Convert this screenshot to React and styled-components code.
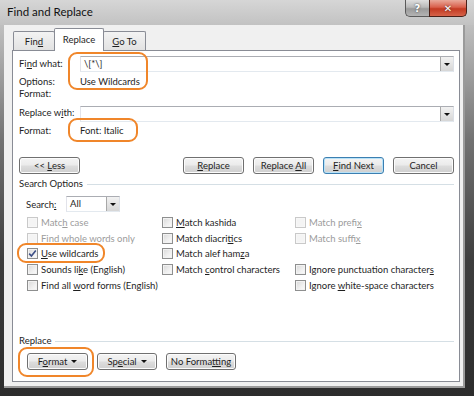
import React from "react";
import styled, { createGlobalStyle, css } from "styled-components";

const GlobalStyle = createGlobalStyle`
  html, body {
    margin: 0;
    padding: 0;
    background: #2b2b2b;
  }
  body {
    font-family: "Segoe UI", Lato, "Open Sans", sans-serif;
    font-size: 9.5px;
    color: #1e1e1e;
  }
  * {
    box-sizing: border-box;
  }
`;

const Window = styled.div`
  position: relative;
  width: 474px;
  height: 396px;
  overflow: hidden;
  display: flex;
  flex-direction: column;
  background: linear-gradient(
    to bottom,
    #cfcfcf 0px,
    #bcbcbc 30px,
    #727272 140px,
    #3e3e3e 260px,
    #2c2c2c 396px
  );
`;

const TitleBar = styled.div`
  height: 25px;
  flex: none;
  display: flex;
  align-items: flex-start;
  padding: 0 7px 0 7px;
  background: linear-gradient(to bottom, #d6d6d6, #c2c2c2);
`;

const Title = styled.div`
  flex: 1;
  margin-top: 5px;
  font-size: 11.5px;
  line-height: 14px;
  color: #111;
`;

const CaptionButton = styled.div`
  height: 17px;
  display: flex;
  align-items: center;
  justify-content: center;
  color: #fff;
  font-family: "DejaVu Sans", sans-serif;
  font-weight: bold;
  text-shadow: 0 0 2px #333;
  ${(p) =>
    p.$close
      ? css`
          width: 38px;
          font-size: 10px;
          border: 1px solid #4a2018;
          border-top: none;
          border-radius: 0 0 5px 0;
          background: linear-gradient(
            to bottom,
            #e9a99a 0%,
            #d9604c 45%,
            #c33a22 55%,
            #d6634a 100%
          );
        `
      : css`
          width: 24px;
          font-size: 10px;
          border: 1px solid #5a5a5a;
          border-top: none;
          border-right: none;
          border-radius: 0 0 0 5px;
          background: linear-gradient(
            to bottom,
            #dedede 0%,
            #b9b9b9 45%,
            #9a9a9a 55%,
            #b4b4b4 100%
          );
        `}
`;

const Client = styled.div`
  flex: 1;
  display: flex;
  flex-direction: column;
  margin: 0 11px 10px 4px;
  padding: 3px 3px 4px 8px;
  background: #f0f0f0;
  box-shadow: 1px 1px 0 1px #9a9a9a;
`;

const TabStrip = styled.div`
  height: 22px;
  flex: none;
  display: flex;
  align-items: flex-end;
  padding-left: 2px;
`;

const Tab = styled.div`
  position: relative;
  width: ${(p) => p.$w}px;
  height: 19px;
  margin-left: -1px;
  display: flex;
  align-items: center;
  justify-content: center;
  padding-top: 1px;
  border: 1px solid #898c95;
  border-bottom: none;
  border-radius: 2px 2px 0 0;
  background: linear-gradient(to bottom, #f3f3f3, #e2e2e2);
  ${(p) =>
    p.$active &&
    css`
      z-index: 1;
      height: 23px;
      margin-bottom: -1px;
      padding-top: 0;
      padding-bottom: 2px;
      background: #fff;
    `}
`;

const Panel = styled.div`
  flex: 1;
  display: flex;
  flex-direction: column;
  padding: 5px 5px 11px 6px;
  background: #fff;
  border: 1px solid #898c95;
`;

const FieldGrid = styled.div`
  display: grid;
  grid-template-columns: 61px 1fr;
  grid-template-rows: 16px 16px 12px 22px 15px;
  align-items: end;
`;

const Label = styled.div`
  line-height: 12px;
  white-space: nowrap;
  ${(p) =>
    p.$combo &&
    css`
      align-self: end;
      line-height: 16px;
      margin-bottom: ${p.$lift || 0}px;
    `}
`;

const Value = styled.div`
  line-height: 12px;
  white-space: nowrap;
`;

const Combo = styled.div`
  height: 16px;
  display: flex;
  align-items: center;
  border: 1px solid #abadb3;
  border-color: #abadb3 #dbdfe6 #e3e9ef #e2e3ea;
  background: #fff;
  width: ${(p) => (p.$w ? `${p.$w}px` : "auto")};
`;

const ComboText = styled.div`
  flex: 1;
  padding-left: 3px;
  line-height: 12px;
  white-space: nowrap;
  overflow: hidden;
`;

const DropButton = styled.div`
  width: 13px;
  height: 14px;
  flex: none;
  display: flex;
  align-items: center;
  justify-content: center;
  border-left: 1px solid #a8a8a8;
  background: linear-gradient(to bottom, #f2f2f2, #d6d6d6);
`;

const Caret = styled.span`
  width: 0;
  height: 0;
  border-left: 3px solid transparent;
  border-right: 3px solid transparent;
  border-top: 3px solid #111;
  margin-left: ${(p) => p.$gap || 0}px;
`;

const ButtonRow = styled.div`
  display: flex;
  align-items: center;
  justify-content: ${(p) => (p.$split ? "space-between" : "flex-start")};
  gap: 9px;
  margin-top: ${(p) => p.$top}px;
  padding-left: ${(p) => p.$indent || 0}px;
`;

const ButtonGroup = styled.div`
  display: flex;
  gap: 9px;
`;

const Button = styled.div`
  width: ${(p) => p.$w || 61}px;
  height: 17px;
  display: flex;
  align-items: center;
  justify-content: center;
  border: 1px solid #707070;
  border-radius: 3px;
  background: linear-gradient(
    to bottom,
    #f4f4f4 0%,
    #ebebeb 48%,
    #dddddd 52%,
    #cfcfcf 100%
  );
  box-shadow: inset 0 0 0 1px #fcfcfc;
  white-space: pre;
  ${(p) =>
    p.$default &&
    css`
      border-color: #3c7fb1;
      box-shadow: inset 0 0 0 1px #b8e2f8;
    `}
`;

const SectionHeader = styled.div`
  display: flex;
  align-items: center;
  gap: 4px;
  height: 12px;
  line-height: 12px;
  margin-top: ${(p) => p.$top}px;
  ${(p) =>
    p.$bottom &&
    css`
      margin-top: auto;
    `}
`;

const Rule = styled.div`
  flex: 1;
  height: 1px;
  background: #d5dfe5;
`;

const SearchRow = styled.div`
  display: flex;
  align-items: center;
  margin-top: 6px;
  padding-left: 7px;
`;

const SearchLabel = styled.div`
  width: 40px;
`;

const CheckGrid = styled.div`
  display: grid;
  grid-template-columns: 135px 133px 1fr;
  grid-template-rows: repeat(5, 15.6px);
  grid-auto-flow: column;
  margin-top: 3px;
  padding-left: 8px;
`;

const CheckItem = styled.div`
  display: flex;
  align-items: center;
  gap: 3px;
  white-space: nowrap;
  color: ${(p) => (p.$disabled ? "#9c9c9c" : "#1e1e1e")};
`;

const Box = styled.span`
  width: 11px;
  height: 11px;
  flex: none;
  display: flex;
  align-items: center;
  justify-content: center;
  border: 1px solid ${(p) => (p.$disabled ? "#c9c9c9" : "#8e8f8f")};
  background: ${(p) =>
    p.$disabled
      ? "#f4f4f4"
      : "linear-gradient(135deg, #d8d8d8 0%, #f0f0f0 60%, #fbfbfb 100%)"};
  box-shadow: inset 0 0 0 1px ${(p) => (p.$disabled ? "#f7f7f7" : "#f2f2f2")};
`;

const Key = styled.span`
  text-decoration: underline;
  text-underline-offset: 1px;
`;

const Annotation = styled.div`
  position: absolute;
  left: ${(p) => p.$x}px;
  top: ${(p) => p.$y}px;
  width: ${(p) => p.$w}px;
  height: ${(p) => p.$h}px;
  border: 2px solid #f0862a;
  border-radius: 9px;
  pointer-events: none;
`;

// "&" marks the mnemonic letter
const Mn = ({ text }) => {
  const i = text.indexOf("&");
  if (i < 0) return <span>{text}</span>;
  return (
    <span>
      {text.slice(0, i)}
      <Key>{text[i + 1]}</Key>
      {text.slice(i + 2)}
    </span>
  );
};

const Check = ({ label, checked, disabled }) => (
  <CheckItem $disabled={disabled}>
    <Box $disabled={disabled}>
      {checked && (
        <svg width="9" height="9" viewBox="0 0 9 9">
          <path
            d="M1.2 4.6 L3.4 7 L7.8 1.4"
            fill="none"
            stroke="#3c4f86"
            strokeWidth="1.6"
          />
        </svg>
      )}
    </Box>
    <Mn text={label} />
  </CheckItem>
);

const options = [
  { label: "Matc&h case", disabled: true },
  { label: "Find wh&ole words only", disabled: true },
  { label: "&Use wildcards", checked: true },
  { label: "Sounds li&ke (English)" },
  { label: "Find all &word forms (English)" },
  { label: "&Match kashida" },
  { label: "Match diacri&tics" },
  { label: "Match alef ham&za" },
  { label: "Match &control characters" },
  null,
  { label: "Match prefi&x", disabled: true },
  { label: "Match suffi&x", disabled: true },
  null,
  { label: "Ignore punctuation character&s" },
  { label: "Ignore &white-space characters" },
];

export default function App() {
  return (
    <>
      <GlobalStyle />
      <Window>
        <TitleBar>
          <Title>Find and Replace</Title>
          <CaptionButton>?</CaptionButton>
          <CaptionButton $close>✕</CaptionButton>
        </TitleBar>
        <Client>
          <TabStrip>
            <Tab $w={42}>
              <Mn text="Fin&d" />
            </Tab>
            <Tab $w={50} $active>
              <Mn text="Replace" />
            </Tab>
            <Tab $w={43}>
              <Mn text="&Go To" />
            </Tab>
          </TabStrip>
          <Panel>
            <FieldGrid>
              <Label $combo>
                <Mn text="Fi&nd what:" />
              </Label>
              <Combo>
                <ComboText>\[*\]</ComboText>
                <DropButton>
                  <Caret />
                </DropButton>
              </Combo>
              <Label>Options:</Label>
              <Value>Use Wildcards</Value>
              <Label>Format:</Label>
              <Value />
              <Label $combo $lift={1}>
                <Mn text="Replace w&ith:" />
              </Label>
              <Combo>
                <ComboText />
                <DropButton>
                  <Caret />
                </DropButton>
              </Combo>
              <Label>Format:</Label>
              <Value>Font: Italic</Value>
            </FieldGrid>

            <ButtonRow $split $top={20}>
              <Button>
                <Mn text="<< &Less" />
              </Button>
              <ButtonGroup>
                <Button>
                  <Mn text="&Replace" />
                </Button>
                <Button>
                  <Mn text="Replace &All" />
                </Button>
                <Button $default>
                  <Mn text="&Find Next" />
                </Button>
                <Button>
                  <Mn text="Cancel" />
                </Button>
              </ButtonGroup>
            </ButtonRow>

            <SectionHeader $top={4}>
              <span>Search Options</span>
              <Rule />
            </SectionHeader>

            <SearchRow>
              <SearchLabel>
                <Mn text="Search&:" />
              </SearchLabel>
              <Combo $w={54}>
                <ComboText>All</ComboText>
                <DropButton>
                  <Caret />
                </DropButton>
              </Combo>
            </SearchRow>

            <CheckGrid>
              {options.map((o, i) =>
                o ? <Check key={i} {...o} /> : <span key={i} />
              )}
            </CheckGrid>

            <SectionHeader $bottom>
              <span>Replace</span>
              <Rule />
            </SectionHeader>
            <ButtonRow $top={6} $indent={8}>
              <Button>
                <Mn text="F&ormat" />
                <Caret $gap={4} />
              </Button>
              <Button $w={60}>
                <Mn text="Sp&ecial" />
                <Caret $gap={4} />
              </Button>
              <Button $w={70}>
                <Mn text="No Forma&tting" />
              </Button>
            </ButtonRow>
          </Panel>
        </Client>

        <Annotation $x={68} $y={52} $w={80} $h={38} />
        <Annotation $x={68} $y={118} $w={70} $h={24} />
        <Annotation $x={17} $y={243} $w={88} $h={20} />
        <Annotation $x={18} $y={347} $w={76} $h={30} />
      </Window>
    </>
  );
}
